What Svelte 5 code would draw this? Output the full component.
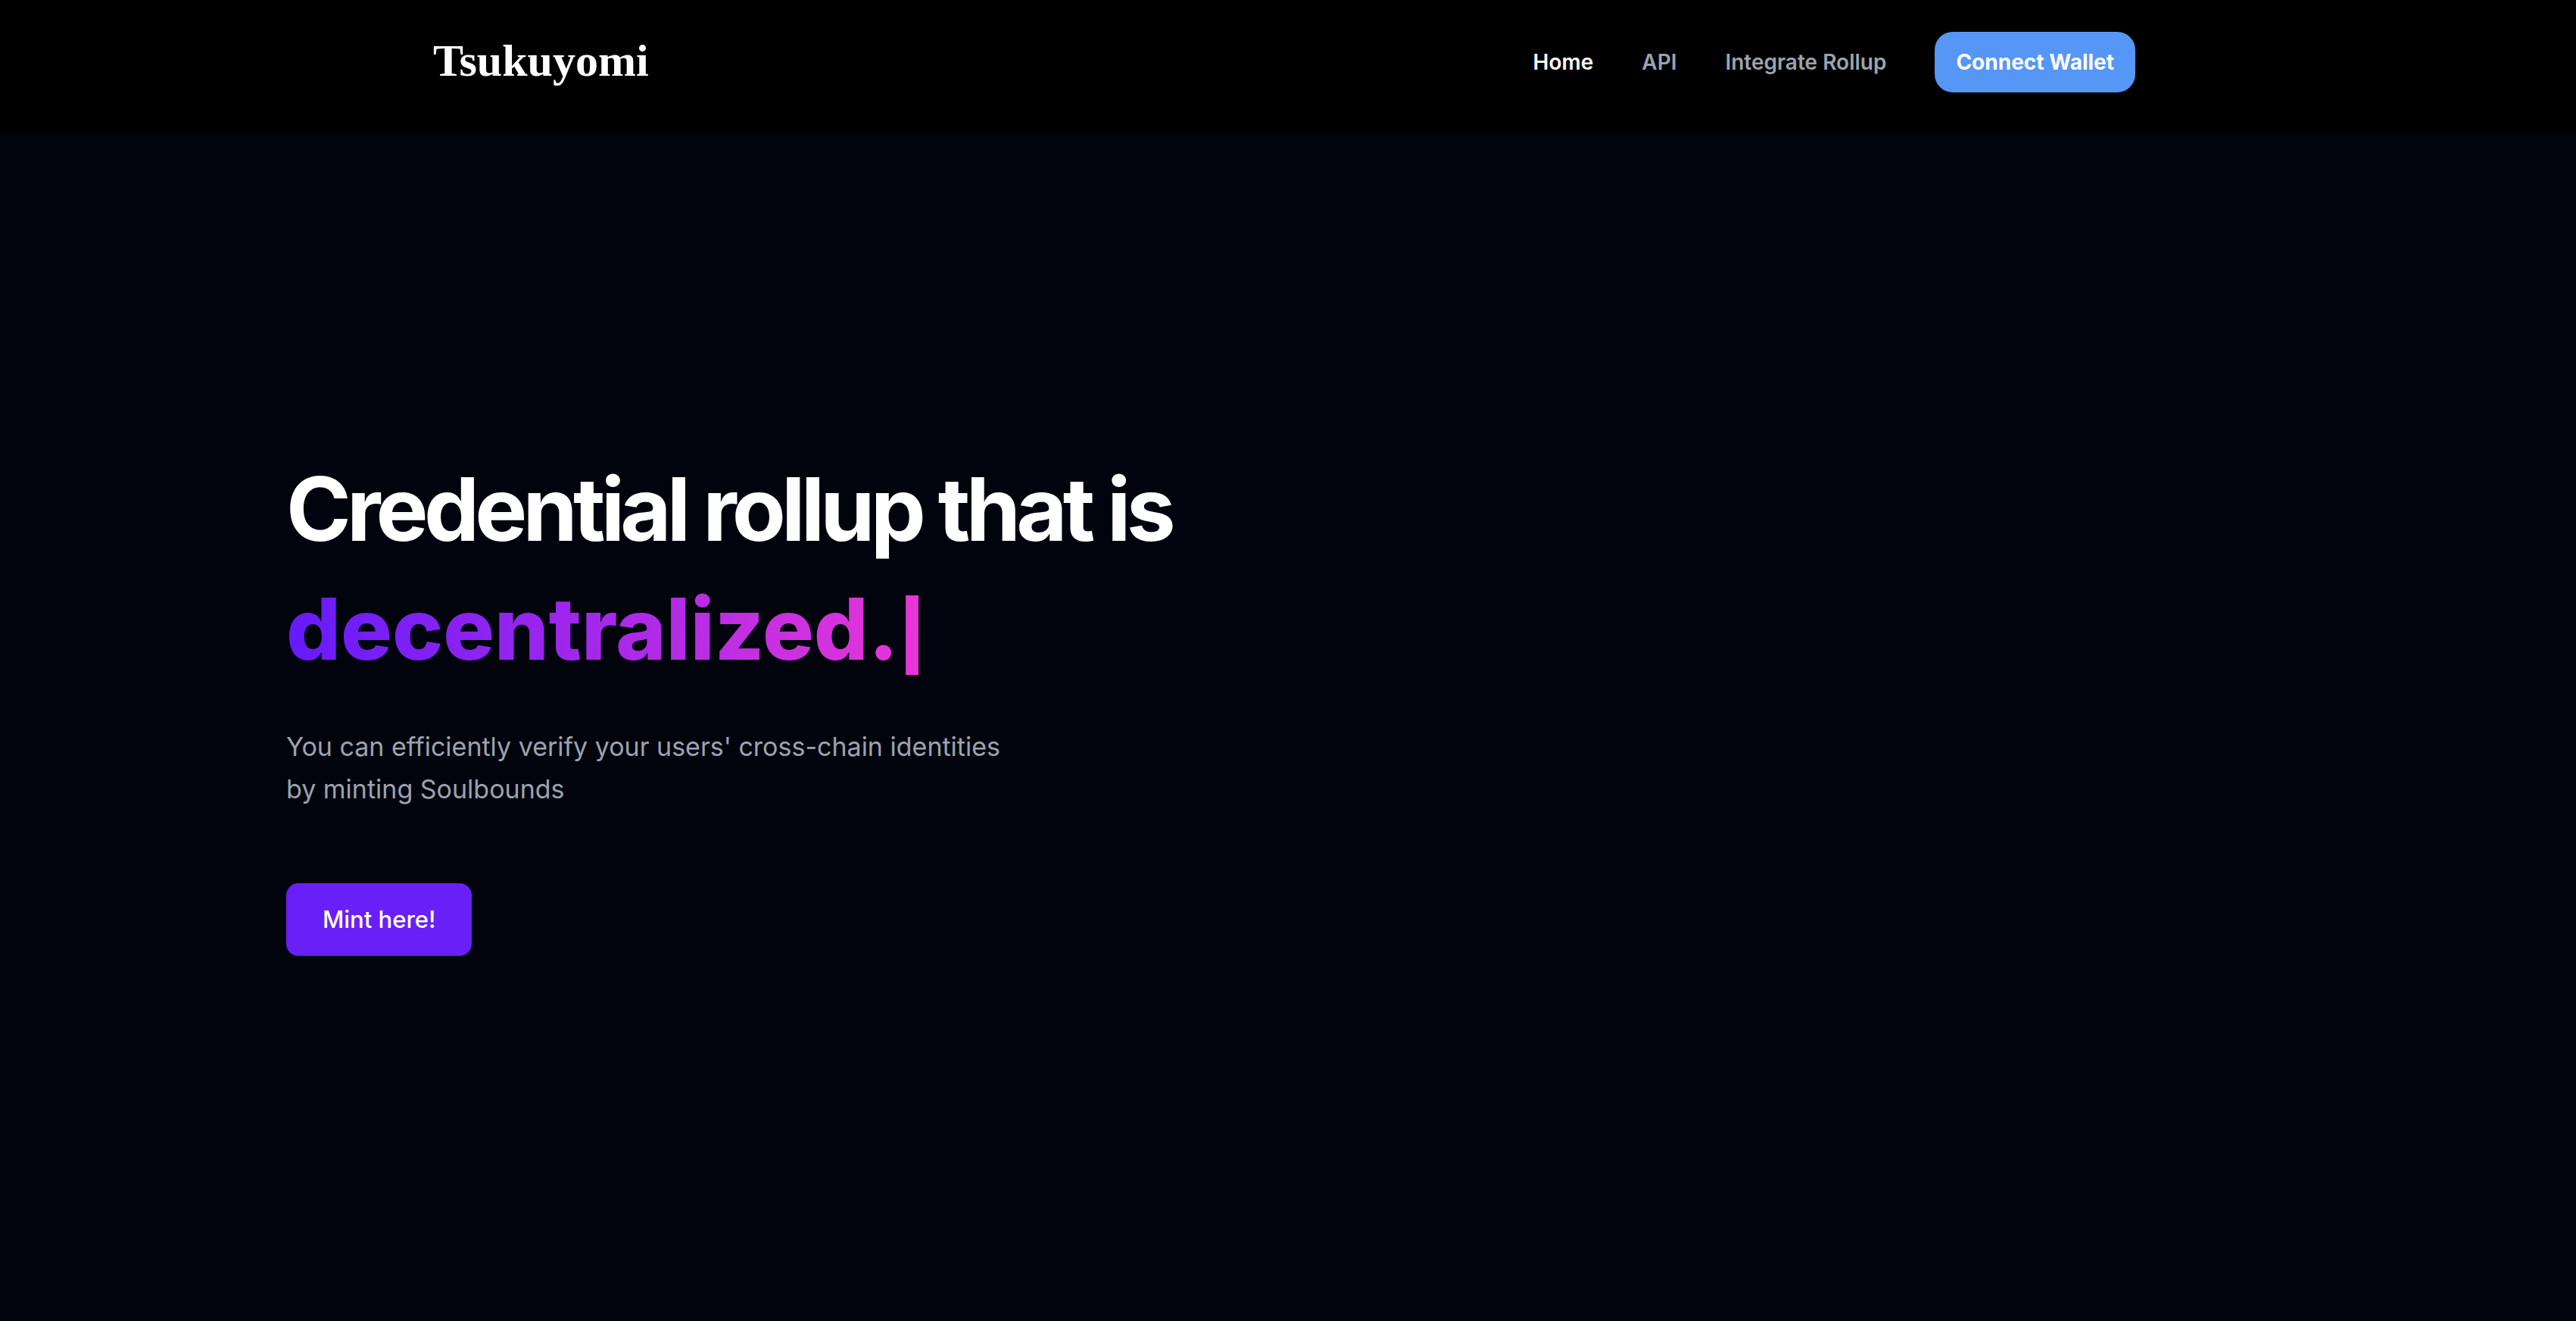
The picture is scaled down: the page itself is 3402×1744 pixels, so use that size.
<script>
  const links = [
    { label: 'Home', current: true },
    { label: 'API', current: false },
    { label: 'Integrate Rollup', current: false }
  ];
</script>

<div class="page">
  <header>
    <a class="logo" href="#home">Tsukuyomi</a>
    <nav aria-label="Main">
      {#each links as link}
        <a href="#{link.label.toLowerCase().replace(' ', '-')}" class:current={link.current}>{link.label}</a>
      {/each}
      <button class="wallet" type="button">Connect Wallet</button>
    </nav>
  </header>

  <main>
    <h1>
      <span class="lead">Credential rollup that is</span>
      <span class="typed">decentralized.<span class="cursor">|</span></span>
    </h1>
    <p>You can efficiently verify your users' cross-chain identities by minting Soulbounds</p>
    <a class="mint" href="#mint">Mint here!</a>
  </main>
</div>

<style>
  :global(body) {
    margin: 0;
    background: #01040d;
  }

  .page {
    min-height: 100vh;
    background: #01040d;
    color: #fff;
    font-family: Inter, 'Liberation Sans', sans-serif;
  }

  a {
    color: inherit;
    text-decoration: none;
  }

  header {
    display: flex;
    align-items: flex-start;
    justify-content: space-between;
    padding: 42px 582px 54px 572px;
    background: #000;
  }

  .logo {
    font: 700 60px/76px 'Liberation Serif', 'Times New Roman', serif;
  }

  nav {
    display: flex;
    align-items: center;
    gap: 64px;
    color: #9ca3af;
    font-size: 28px;
    font-weight: 600;
    line-height: 40px;
  }

  .current {
    color: #fff;
  }

  .wallet {
    padding: 20px 28px;
    border: 0;
    border-radius: 24px;
    background: #5596f7;
    color: #fff;
    font: inherit;
    font-weight: 700;
  }

  main {
    display: flex;
    flex-direction: column;
    align-items: flex-start;
    padding: 418px 378px 0;
  }

  h1 {
    display: flex;
    flex-direction: column;
    align-items: flex-start;
    margin: 0;
    font-weight: 700;
  }

  .lead {
    font-size: 116px;
    line-height: 156px;
    letter-spacing: -0.05em;
  }

  .typed {
    background: linear-gradient(90deg, #651bfb, #e836d8);
    background-clip: text;
    -webkit-background-clip: text;
    color: transparent;
    font-size: 113px;
    font-weight: 800;
    line-height: 160px;
  }

  .cursor {
    font-size: 88px;
    font-weight: 900;
    line-height: 1;
  }

  p {
    max-width: 960px;
    margin: 48px 0 96px;
    color: #9ca3af;
    font-size: 34px;
    line-height: 56px;
  }

  .mint {
    padding: 24px 48px;
    border-radius: 16px;
    background: #691ff7;
    font-size: 31px;
    font-weight: 500;
    line-height: 48px;
  }
</style>
